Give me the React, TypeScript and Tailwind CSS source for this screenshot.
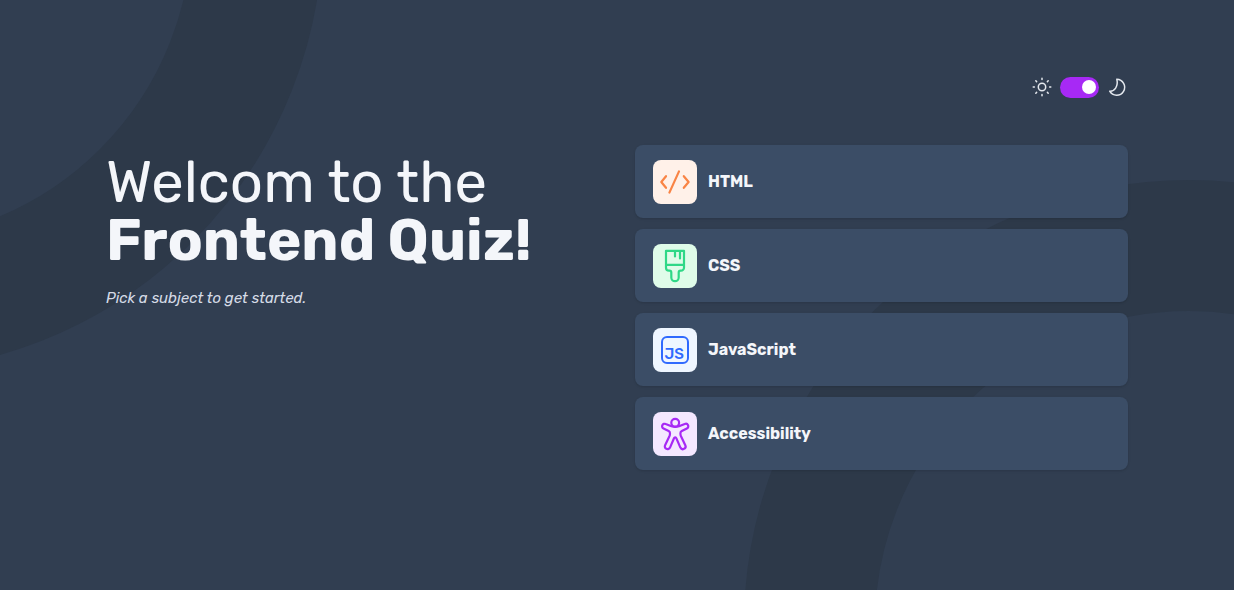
import { useState } from "react";
import type { ReactNode } from "react";

function HtmlIcon() {
  return (
    <svg viewBox="0 0 44 44" className="size-11" fill="none" stroke="#f98445" strokeWidth="2.2" strokeLinecap="round" strokeLinejoin="round" aria-hidden="true">
      <path d="M13 16.2 8.3 22l4.7 5.8M30.8 16.2 35.6 22l-4.8 5.8M26 11.4 16.4 32.6" />
    </svg>
  );
}

function CssIcon() {
  return (
    <svg viewBox="0 0 44 44" className="size-11" fill="none" stroke="#2fd887" strokeWidth="2.2" strokeLinecap="round" strokeLinejoin="round" aria-hidden="true">
      <path d="M13 6.8h18v16.9a3 3 0 0 1-3 3h-.5a1.8 1.8 0 0 0-1.8 1.8v5a3.7 3.7 0 0 1-7.4 0v-5a1.8 1.8 0 0 0-1.8-1.8H16a3 3 0 0 1-3-3ZM13 20.8h18M22 7v5.4M27 7v7.4" />
    </svg>
  );
}

function JsIcon() {
  return (
    <span aria-hidden="true" className="flex size-7 items-end justify-end rounded-md border-2 border-[#306afe] pr-[3px] text-[15px] leading-4 font-medium text-[#306afe]">
      JS
    </span>
  );
}

function AccessibilityIcon() {
  return (
    <svg viewBox="0 0 44 44" className="size-11" fill="none" stroke="#a729f5" strokeWidth="2.2" strokeLinecap="round" strokeLinejoin="round" aria-hidden="true">
      <circle cx="22.2" cy="10.8" r="3.9" />
      <path d="M18.4 14.2 12.7 12a2.500 2.500 0 0 0-2.200 4.500l5.100 2.600c1 .5 1.400 1.100 1.400 2.100 0 1.200-.1 2-.6 3.100L12.100 33.200a2.700 2.700 0 0 0 4.900 2.400l4-9.300c.5-1.200 1.900-1.200 2.400 0l4 9.300a2.700 2.700 0 0 0 4.900-2.400L28 24.300c-.5-1.100-.6-1.900-.6-3.100 0-1 .4-1.600 1.400-2.100l5.100-2.600A2.500 2.500 0 0 0 31.700 12L26 14.200c-2.400.9-5.200.9-7.600 0Z" />
    </svg>
  );
}

function SunIcon() {
  return (
    <svg viewBox="0 0 22 22" className="size-[22px]" fill="none" stroke="#e4e8ee" strokeWidth="1.5" strokeLinecap="round" aria-hidden="true">
      <circle cx="11" cy="11" r="3.7" />
      <path d="M11 2.2v1.200M11 18.600v1.200M2.200 11h1.200M18.600 11h1.200M4.800 4.800l.8.8M16.400 16.400l.8.8M4.800 17.200l.8-.8M16.400 5.600l.8-.8" />
    </svg>
  );
}

function MoonIcon() {
  return (
    <svg viewBox="0 0 22 22" className="size-[22px]" fill="none" stroke="#e4e8ee" strokeWidth="1.5" strokeLinejoin="round" aria-hidden="true">
      <path d="M10.800 3.200a8 8 0 1 1-7.100 12c4.700.4 8.800-4.700 7.100-12Z" />
    </svg>
  );
}

type Subject = { name: string; tile: string; icon: ReactNode };

const subjects: Subject[] = [
  { name: "HTML", tile: "bg-[#fff1e9]", icon: <HtmlIcon /> },
  { name: "CSS", tile: "bg-[#dffce9]", icon: <CssIcon /> },
  { name: "JavaScript", tile: "bg-[#eff6ff]", icon: <JsIcon /> },
  { name: "Accessibility", tile: "bg-[#f4e8ff]", icon: <AccessibilityIcon /> },
];

export default function App() {
  const [dark, setDark] = useState(true);

  return (
    <div className="relative isolate min-h-screen overflow-hidden bg-[#313e51] px-6 pt-[76px] pb-12 font-['Rubik','Roboto',sans-serif] text-[#f4f6fa] md:px-[106px]">
      <div className="absolute -top-[518px] -left-[567px] -z-10 size-[890px] rounded-full border-[131px] border-[#2d3949]" />
      <div className="absolute -right-[400px] -bottom-[480px] -z-10 size-[890px] rounded-full border-[131px] border-[#2d3949]" />

      <header className="flex items-center justify-end gap-[7px]">
        <SunIcon />
        <input
          type="checkbox"
          role="switch"
          aria-label="Dark mode"
          checked={dark}
          onChange={(e) => setDark(e.target.checked)}
          className="flex h-[21px] w-[39px] cursor-pointer appearance-none items-center rounded-full bg-[#a729f5] px-[3px] before:size-3.5 before:rounded-full before:bg-white checked:justify-end"
        />
        <MoonIcon />
      </header>

      <main className="mt-[47px] grid gap-9 md:grid-cols-2">
        <section className="pt-[9px]">
          <h1 className="text-[58px] leading-[58px] whitespace-nowrap">
            Welcom to the
            <br />
            <span className="font-bold">Frontend Quiz!</span>
          </h1>
          <p className="mt-4 text-[15px] leading-6 text-[#d5dbe6] italic">Pick a subject to get started.</p>
        </section>

        <ul className="flex flex-col gap-[11px]">
          {subjects.map((s) => (
            <li key={s.name}>
              <button type="button" className="flex min-h-[73px] w-full cursor-pointer items-center gap-[11px] rounded-lg bg-[#3b4d66] px-[18px] text-left shadow-sm">
                <span className={`flex size-11 shrink-0 items-center justify-center rounded-lg ${s.tile}`}>{s.icon}</span>
                <span className="text-base font-bold">{s.name}</span>
              </button>
            </li>
          ))}
        </ul>
      </main>
    </div>
  );
}
